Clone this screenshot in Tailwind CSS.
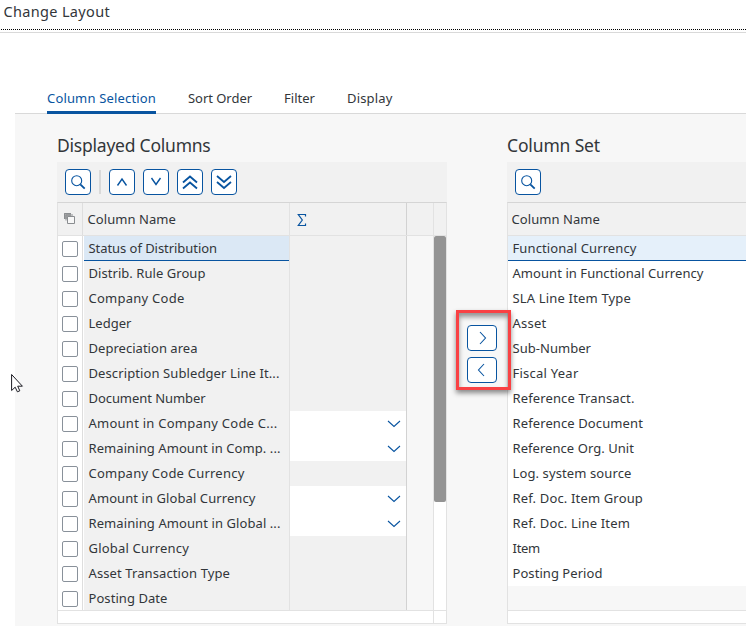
<!DOCTYPE html>
<html lang="en">
<head>
<meta charset="utf-8">
<title>Change Layout</title>
<script src="https://cdn.jsdelivr.net/npm/@tailwindcss/browser@4"></script>
</head>
<body class="relative w-[746px] h-[626px] overflow-hidden bg-white font-['Noto_Sans',sans-serif] text-[13px] text-[#32363a]">
<header class="h-[33px] border-b border-[#d9d9d9]">
  <h1 class="h-[29px] pl-[3.5px] text-[14.5px] leading-[22px]"><span data-w="106.5" data-size="14.5">Change Layout</span></h1>
  <svg class="block" width="746" height="1"><path d="M1 .5H746" stroke="#000" stroke-dasharray="1 1"/></svg>
</header>
<nav class="ml-[15px] mt-[50px] flex h-[31px] gap-8 border-b border-[#d9d9d9] pl-8 leading-[30px]">
  <a class="h-[31px] w-[109px] border-b-3 border-[#0854a0] text-[#0854a0] whitespace-nowrap"><span data-w="109">Column Selection</span></a>
  <a class="w-16 whitespace-nowrap"><span data-w="64">Sort Order</span></a>
  <a class="w-[31px] whitespace-nowrap"><span data-w="31">Filter</span></a>
  <a><span data-w="45.5">Display</span></a>
</nav>
<main class="ml-[15px] flex h-[512px] bg-[#f7f7f7] pl-[42px]">
  <section class="w-[390px] shrink-0">
    <h2 class="h-12 pt-[19px] text-[17.5px] leading-6"><span data-w="153.5" data-size="17.5">Displayed Columns</span></h2>
    <div class="flex h-10 items-center bg-[#f1f1f1] pl-2 text-[#0854a0]">
      <button class="size-[26px] rounded-[4px] border border-current bg-white"><svg width="24" height="24" fill="none" stroke="currentColor"><circle cx="10.7" cy="10.7" r="5" stroke-width="1.1"/><path d="M14.3 14.3l4.4 4.4" stroke-width="1.8"/></svg></button>
      <i class="ml-2 mr-2 h-6 w-0.5 bg-[#d9d9d9]"></i>
      <div class="flex gap-2">
        <button class="size-[26px] rounded-[4px] border border-current bg-white"><svg width="24" height="24" fill="none" stroke="currentColor" stroke-width="1.4"><path d="M7.5 15.5L12 9l4.5 6.5"/></svg></button>
        <button class="size-[26px] rounded-[4px] border border-current bg-white"><svg width="24" height="24" fill="none" stroke="currentColor" stroke-width="1.4"><path d="M7.5 8L12 14.5l4.5-6.5"/></svg></button>
        <button class="size-[26px] rounded-[4px] border border-current bg-white"><svg width="24" height="24" fill="none" stroke="currentColor" stroke-width="1.8"><path d="M5 12.5l7-6 7 6M5 18.5l7-6 7 6"/></svg></button>
        <button class="size-[26px] rounded-[4px] border border-current bg-white"><svg width="24" height="24" fill="none" stroke="currentColor" stroke-width="1.8"><path d="M5 6l7 6 7-6M5 12l7 6 7-6"/></svg></button>
      </div>
    </div>
    <div class="h-[422px] border border-[#e2e2e2] border-t-[#d5d5d5] bg-white">
      <div class="flex h-[33px] border-b border-[#e2e2e2] bg-[#f1f1f1]">
        <div class="w-[25px] border-r border-[#dedede]"><svg width="24" height="32" fill="none" stroke="#8a8d90"><path d="M6 10h7v6H6z" fill="#a8a8a8" stroke="none"/><path d="M6.5 16v-5.500H13"/><path d="M9.500 13.500h7v7h-7z" fill="#f7f7f7"/><path d="M8 17.500V12h7"/></svg></div>
        <div class="w-[207px] border-r border-[#e2e2e2] bg-[#f1f1f1] pl-[4.5px] leading-8 whitespace-nowrap"><span data-w="88.5">Column Name</span></div>
        <div class="w-[117px] border-r border-[#d2d2d2]"><svg width="24" height="32" fill="none" stroke="#0854a0" stroke-width="1.2"><path d="M15.500 13.500v-2H8.300L12.300 17l-4 5.500h7.200v-2"/></svg></div>
        <div class="w-[27px] border-r border-[#e2e2e2]"></div>
      </div>
      <div class="flex h-[375px] border-b border-[#e2e2e2]">
        <div id="displayed" class="h-[374px] w-[349px] overflow-hidden"></div>
        <div class="w-[27px] border-r border-[#e2e2e2] bg-[#f7f7f7]"></div>
        <div class="h-[266px] w-3 rounded-[2px] bg-[#949494]"></div>
      </div>
      <div class="h-3 w-[376px] border-r border-[#e2e2e2]"></div>
    </div>
  </section>
  <section class="ml-[60px] w-[239px] shrink-0">
    <h2 class="h-12 pt-[19px] text-[17.5px] leading-6"><span data-w="93" data-size="17.5">Column Set</span></h2>
    <div class="flex h-10 items-center bg-[#f1f1f1] pl-2 text-[#0854a0]">
      <button class="size-[26px] rounded-[4px] border border-current bg-white"><svg width="24" height="24" fill="none" stroke="currentColor"><circle cx="10.7" cy="10.7" r="5" stroke-width="1.1"/><path d="M14.3 14.3l4.4 4.4" stroke-width="1.8"/></svg></button>
    </div>
    <div class="h-[422px] border-y border-l border-[#e2e2e2] border-t-[#d5d5d5] bg-white">
      <div class="h-[33px] border-b border-[#e2e2e2] bg-[#f1f1f1] pl-[3.5px] leading-8"><span data-w="88.5">Column Name</span></div>
      <div id="available" class="h-[375px] border-b border-[#e2e2e2] bg-[#f7f7f7]"></div>
    </div>
  </section>
</main>
<aside class="absolute left-[456px] top-[310px] flex h-20 w-[55px] flex-col gap-1.5 border-3 border-[#f94144] pl-2 pt-3 text-[#0854a0] shadow-[0_3px_5px_rgba(0,0,0,0.45),inset_0_4px_5px_rgba(0,0,0,0.4)]">
  <button class="h-[26px] w-[30px] rounded-[4px] border border-current bg-white"><svg width="28" height="24" fill="none" stroke="currentColor" stroke-width="1.1"><path d="M12 6l5.500 6-5.500 6"/></svg></button>
  <button class="h-[26px] w-[30px] rounded-[4px] border border-current bg-white"><svg width="28" height="24" fill="none" stroke="currentColor" stroke-width="1.1"><path d="M16 6l-5.500 6 5.500 6"/></svg></button>
</aside>
<svg class="absolute left-[11px] top-[373px]" width="14" height="21" fill="#fff" stroke="#1a1a22"><path d="M.6 1.500v16l3.600-3.300 2.200 4.600 2.400-1-2.100-4.600h4.700z"/></svg>
<script>
const displayed = [
  ['Status of Distribution', 128.5], ['Distrib. Rule Group', 117], ['Company Code', 96], ['Ledger', 43],
  ['Depreciation area', 109], ['Description Subledger Line It...', 191], ['Document Number', 117],
  ['Amount in Company Code C...', 189, 1], ['Remaining Amount in Comp. ...', 192, 1], ['Company Code Currency', 156],
  ['Amount in Global Currency', 167, 1], ['Remaining Amount in Global ...', 192, 1], ['Global Currency', 100.5],
  ['Asset Transaction Type', 141.5], ['Posting Date', 79]
];
const available = [
  ['Functional Currency', 124], ['Amount in Functional Currency', 191], ['SLA Line Item Type', 118.5], ['Asset', 34],
  ['Sub-Number', 78.5], ['Fiscal Year', 66], ['Reference Transact.', 122], ['Reference Document', 130.5],
  ['Reference Org. Unit', 121.5], ['Log. system source', 119], ['Ref. Doc. Item Group', 130.5],
  ['Ref. Doc. Line Item', 117.5], ['Item', 27.5], ['Posting Period', 90]
];
document.getElementById('displayed').innerHTML = displayed.map(([t, w, edit], i) => `
  <div class="flex h-[25px]">
    <div class="w-[25px] border-r border-[#dedede] bg-white pl-1 pt-[5px]"><div class="size-4 rounded-[2px] border border-[#89919a] bg-white"></div></div>
    <div class="ml-px w-[206px] whitespace-nowrap border-r border-[#e2e2e2] ${i ? 'bg-[#f1f1f1]' : 'bg-[#dbe8f5]'}"><div class="h-[25px] pl-[4.5px] leading-[24px] ${i ? '' : 'border-b border-[#0854a0]'}"><span data-w="${w}">${t}</span></div></div>
    <div class="w-[117px] border-r border-[#d2d2d2] ${edit ? 'bg-white' : 'bg-[#f1f1f1]'}">${edit ? '<svg width="116" height="25" fill="none" stroke="#0854a0" stroke-width="1.1"><path d="M98 10l6 5.500 6-5.500"/></svg>' : ''}</div>
  </div>`).join('');
document.getElementById('available').innerHTML = available.map(([t, w], i) => `
  <div class="h-[25px] pl-[4.5px] leading-[24px] ${i ? 'bg-white' : 'border-b border-[#0854a0] bg-[#e5f0fa]'}"><span data-w="${w}">${t}</span></div>`).join('');
/* Track every label to its width */
const ctx = document.createElement('canvas').getContext('2d');
document.querySelectorAll('[data-w]').forEach(el => {
  ctx.font = (el.dataset.size || 13) + 'px "Noto Sans"';
  const natural = ctx.measureText(el.textContent).width;
  el.style.letterSpacing = (el.dataset.w - natural) / el.textContent.length + 'px';
});
</script>
</body>
</html>
